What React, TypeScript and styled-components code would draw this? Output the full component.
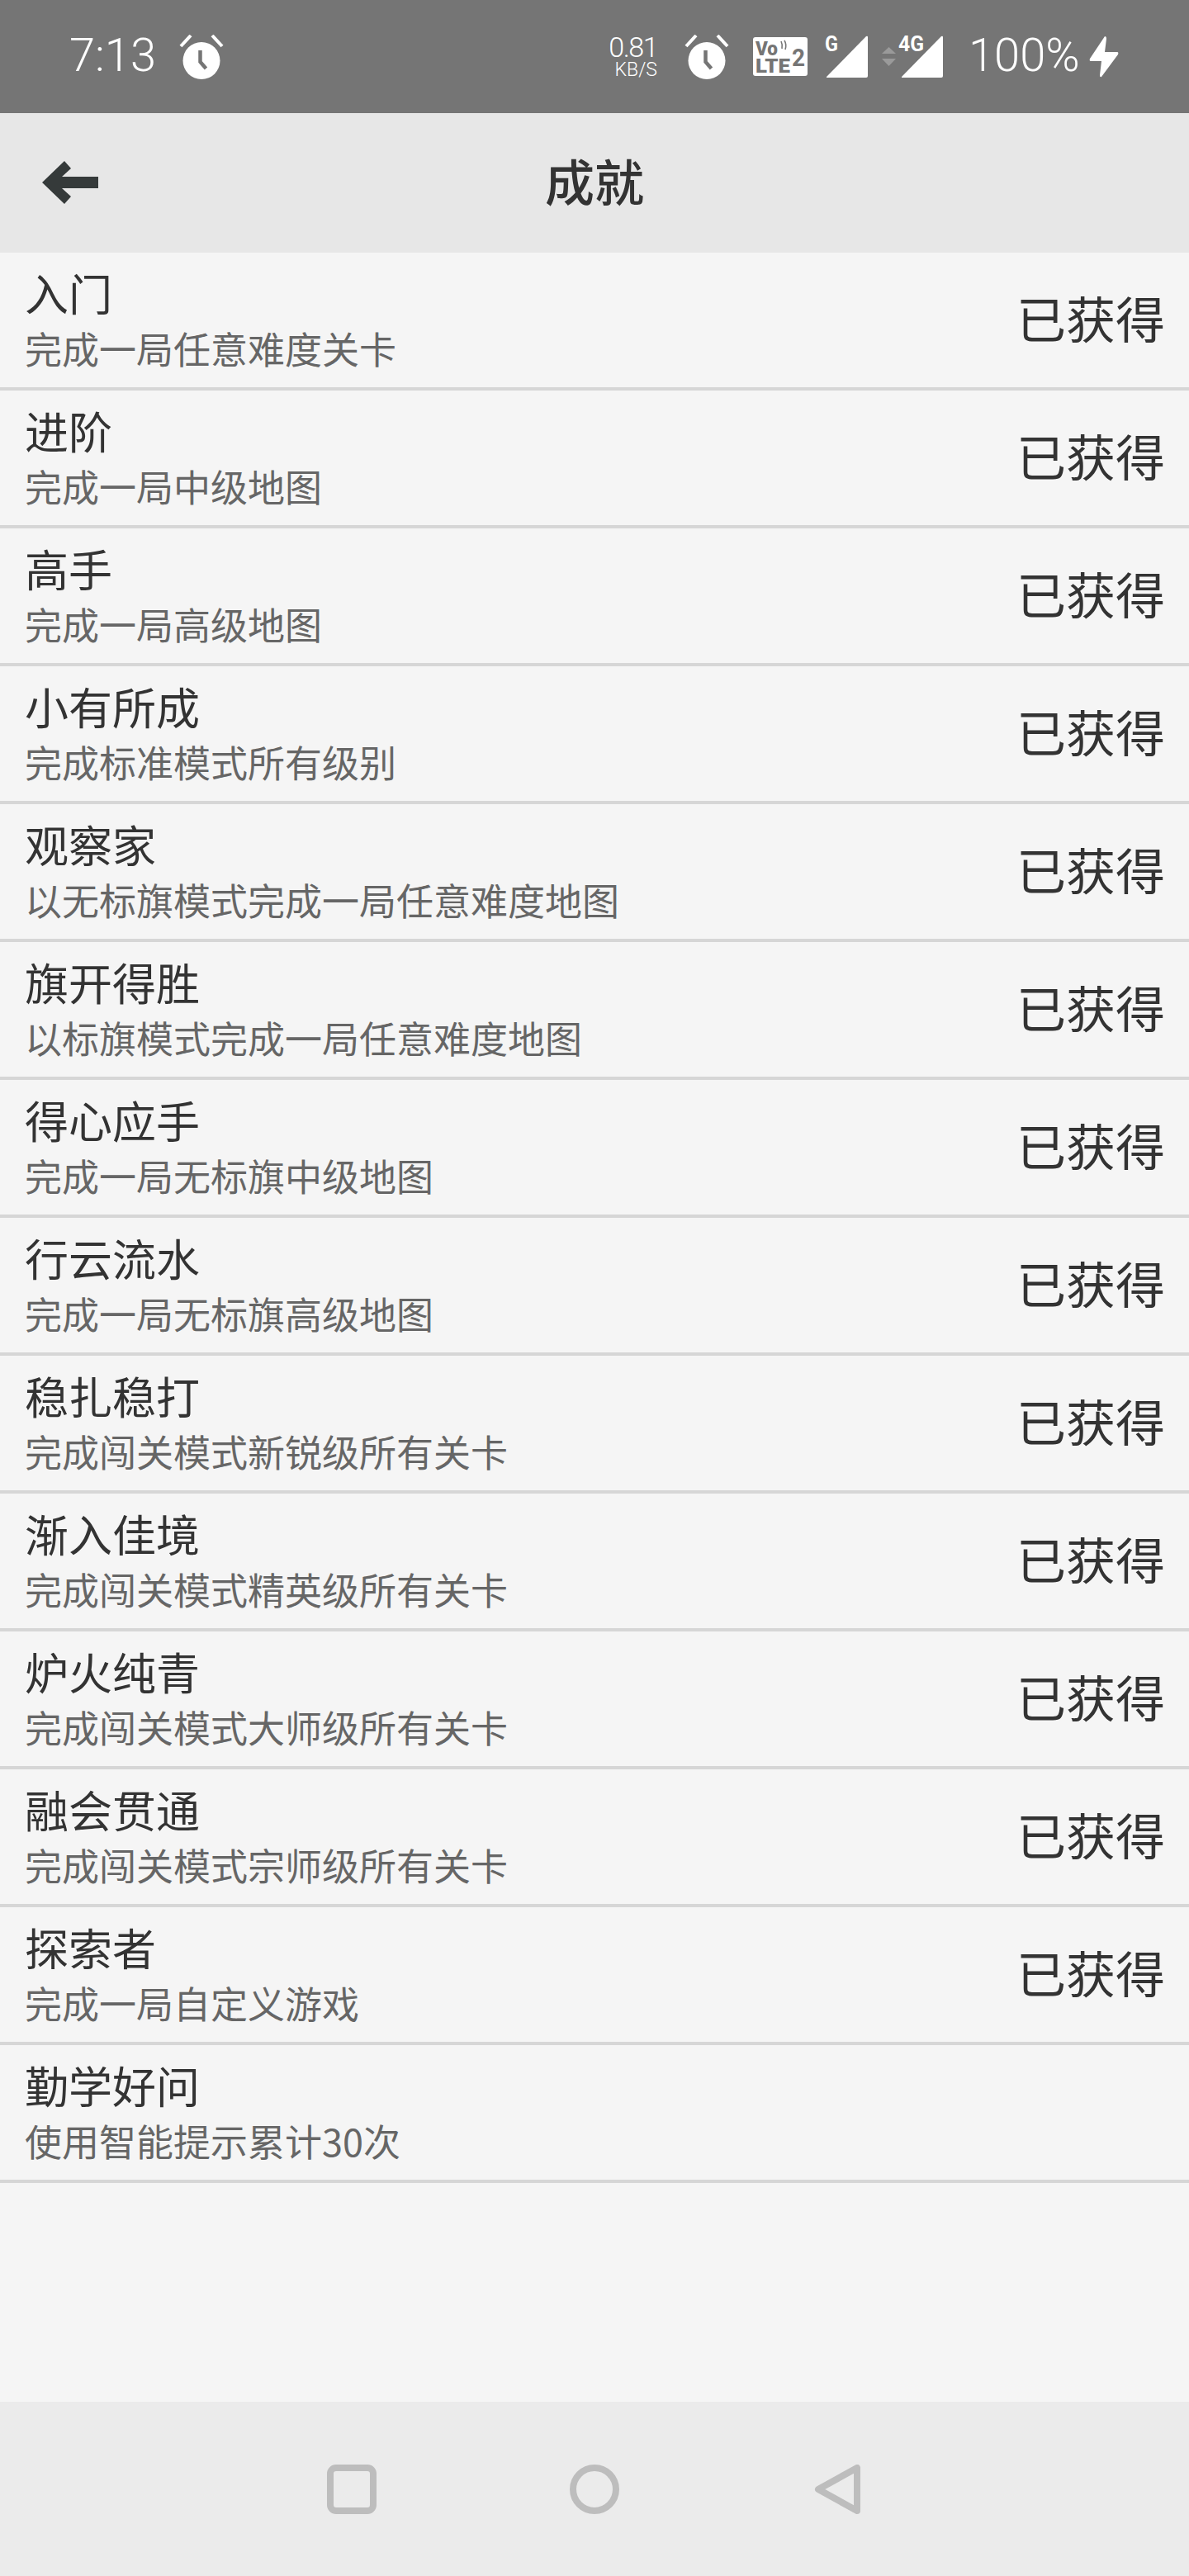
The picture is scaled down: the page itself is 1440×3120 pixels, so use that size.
import React from "react";
import styled, { createGlobalStyle } from "styled-components";

const Global = createGlobalStyle`
  html, body { margin: 0; padding: 0; background: #f5f5f5; }
  * { box-sizing: border-box; }
`;

const Screen = styled.div`
  width: 1440px;
  height: 3120px;
  display: flex;
  flex-direction: column;
  overflow: hidden;
  background: #f5f5f5;
  font-family: "Noto Sans CJK SC", "Noto Sans", sans-serif;
`;

const StatusBar = styled.div`
  height: 137px;
  flex: none;
  background: #757575;
  display: flex;
  align-items: flex-start;
  justify-content: space-between;
  padding: 42px 85px 0 84px;
  color: #fff;
`;

const StatusGroup = styled.div`
  display: flex;
  align-items: flex-start;
`;

const Clock = styled.span`
  font-family: Roboto, sans-serif;
  font-weight: 300;
  font-size: 56px;
  line-height: 50px;
  width: 133px;
`;

const Speed = styled.div`
  width: 59px;
  margin-right: 33px;
  display: flex;
  flex-direction: column;
  align-items: flex-end;
  font-family: Roboto, sans-serif;
  font-weight: 300;
`;

const SpeedValue = styled.span`
  font-size: 34px;
  line-height: 30px;
  letter-spacing: -1.5px;
`;

const SpeedUnit = styled.span`
  font-size: 23px;
  line-height: 26px;
`;

const Icon = styled.svg<{ $w: number; $h: number; $mr?: number; $ml?: number; $mt?: number }>`
  display: block;
  flex: none;
  width: ${(p) => p.$w}px;
  height: ${(p) => p.$h}px;
  margin-right: ${(p) => p.$mr ?? 0}px;
  margin-left: ${(p) => p.$ml ?? 0}px;
  margin-top: ${(p) => p.$mt ?? 0}px;
`;

const Battery = styled.span`
  font-family: Roboto, sans-serif;
  font-weight: 300;
  font-size: 56px;
  line-height: 50px;
  width: 146px;
  margin-left: 31px;
`;

const Header = styled.header`
  height: 169px;
  flex: none;
  background: #e7e7e7;
  position: relative;
  display: flex;
  align-items: center;
  justify-content: center;
`;

const BackButton = styled.div`
  position: absolute;
  left: 51px;
  top: 58px;
  display: flex;
`;

const Title = styled.h1`
  margin: 0 0 8px;
  font-size: 60px;
  font-weight: 500;
  line-height: 1;
  color: #333;
`;

const List = styled.div`
  flex: 1;
  display: flex;
  flex-direction: column;
`;

const Row = styled.div`
  height: 167px;
  flex: none;
  display: flex;
  align-items: center;
  justify-content: space-between;
  padding: 0 29px 0 30px;
  border-bottom: 4px solid #d6d6d6;
`;

const RowText = styled.div`
  display: flex;
  flex-direction: column;
`;

const RowTitle = styled.div`
  font-size: 53px;
  line-height: 68px;
  font-weight: 400;
  color: #333;
`;

const RowDesc = styled.div`
  font-size: 45px;
  line-height: 68px;
  font-weight: 400;
  color: #666;
`;

const RowState = styled.div`
  font-size: 60px;
  line-height: 1;
  font-weight: 400;
  color: #333;
  margin-bottom: 8px;
`;

const NavBar = styled.nav`
  height: 211px;
  flex: none;
  background: #ebebeb;
  display: flex;
  align-items: flex-start;
  justify-content: center;
  gap: 234px;
  padding-top: 76px;
`;

const items: [string, string, boolean][] = [
  ["入门", "完成一局任意难度关卡", true],
  ["进阶", "完成一局中级地图", true],
  ["高手", "完成一局高级地图", true],
  ["小有所成", "完成标准模式所有级别", true],
  ["观察家", "以无标旗模式完成一局任意难度地图", true],
  ["旗开得胜", "以标旗模式完成一局任意难度地图", true],
  ["得心应手", "完成一局无标旗中级地图", true],
  ["行云流水", "完成一局无标旗高级地图", true],
  ["稳扎稳打", "完成闯关模式新锐级所有关卡", true],
  ["渐入佳境", "完成闯关模式精英级所有关卡", true],
  ["炉火纯青", "完成闯关模式大师级所有关卡", true],
  ["融会贯通", "完成闯关模式宗师级所有关卡", true],
  ["探索者", "完成一局自定义游戏", true],
  ["勤学好问", "使用智能提示累计30次", false],
];

const Alarm = ({ mr }: { mr?: number }) => (
  <Icon viewBox="0 0 54 54" $w={54} $h={54} $mr={mr}>
    <circle cx="27" cy="31.5" r="22.5" fill="#fff" />
    <path d="M2 14 L14 1 M52 14 L40 1" stroke="#fff" strokeWidth="4" fill="none" />
    <path d="M25.5 19 V33 L32.5 41" stroke="#757575" strokeWidth="4.5" fill="none" />
  </Icon>
);

const Signal = ({ label, w, ml, mr }: { label: string; w: number; ml?: number; mr?: number }) => (
  <Icon viewBox={`0 -7 ${w} 58`} $w={w} $h={58} $mt={-6} $ml={ml} $mr={mr}>
    <path d={`M${w - 50} 50 L${w - 2} 1 Q${w} 0 ${w} 2 V49 Q${w} 51 ${w - 2} 51 H${w - 50} Z`} fill="#fff" />
    <text
      x={0}
      y={19}
      fill="#fff"
      fontFamily="Roboto, sans-serif"
      fontWeight="700"
      fontSize="26"
      textLength={label.length === 1 ? 16 : 31}
      lengthAdjust="spacingAndGlyphs"
    >
      {label}
    </text>
  </Icon>
);

export default function App() {
  return (
    <Screen>
      <Global />
      <StatusBar>
        <StatusGroup>
          <Clock>7:13</Clock>
          <Alarm />
        </StatusGroup>
        <StatusGroup>
          <Speed>
            <SpeedValue>0.81</SpeedValue>
            <SpeedUnit>KB/S</SpeedUnit>
          </Speed>
          <Alarm mr={29} />
          <Icon viewBox="0 -3 66 54" $w={66} $h={54} $mr={21}>
            <rect width="66" height="47" rx="3" fill="#fff" />
            <text x="3" y="22" fill="#757575" fontFamily="Roboto, sans-serif" fontWeight="900" fontSize="24" textLength="27" lengthAdjust="spacingAndGlyphs">Vo</text>
            <path d="M34 5 q2 4 1 9 M38 4 q3 5 1 11" stroke="#757575" strokeWidth="1.6" fill="none" />
            <text x="3" y="43" fill="#757575" fontFamily="Roboto, sans-serif" fontWeight="900" fontSize="24" textLength="42" lengthAdjust="spacingAndGlyphs">LTE</text>
            <text x="47" y="35" fill="#757575" fontFamily="Roboto, sans-serif" fontWeight="700" fontSize="29" textLength="16" lengthAdjust="spacingAndGlyphs">2</text>
          </Icon>
          <Signal label="G" w={52} />
          <Icon viewBox="0 0 17 24" $w={17} $h={24} $mt={15} $ml={17}>
            <path d="M8.5 0 L17 8 H0 Z M0 14 H17 L8.5 23 Z" fill="#9a9a9a" />
          </Icon>
          <Signal label="4G" w={54} ml={3} />
          <Battery>100%</Battery>
          <Icon viewBox="0 0 36 50" $w={36} $h={50} $mt={2}>
            <path d="M19 0 Q21 0 21 3 L19 19 H34 Q36 19 35 22 L15 49 Q13 50 13 47 L15 30 H2 Q0 30 1 27 Z" fill="#fff" />
          </Icon>
        </StatusGroup>
      </StatusBar>
      <Header>
        <BackButton>
          <Icon viewBox="0 0 68 52" $w={68} $h={52}>
            <path d="M0 26 L27 0 L35 9 L24 19 H68 V33 H24 L35 43 L27 52 Z" fill="#353a3a" />
          </Icon>
        </BackButton>
        <Title>成就</Title>
      </Header>
      <List>
        {items.map(([t, d, done]) => (
          <Row key={t}>
            <RowText>
              <RowTitle>{t}</RowTitle>
              <RowDesc>{d}</RowDesc>
            </RowText>
            {done && <RowState>已获得</RowState>}
          </Row>
        ))}
      </List>
      <NavBar>
        <Icon viewBox="0 0 60 60" $w={60} $h={60}>
          <rect x="4" y="4" width="52" height="52" rx="7" fill="none" stroke="#bdbdbd" strokeWidth="8" />
        </Icon>
        <Icon viewBox="0 0 60 60" $w={60} $h={60}>
          <circle cx="30" cy="30" r="26" fill="none" stroke="#bdbdbd" strokeWidth="8" />
        </Icon>
        <Icon viewBox="0 0 60 60" $w={60} $h={60}>
          <path d="M54 4 V56 L7 30 Z" fill="none" stroke="#bdbdbd" strokeWidth="8" strokeLinejoin="round" />
        </Icon>
      </NavBar>
    </Screen>
  );
}
